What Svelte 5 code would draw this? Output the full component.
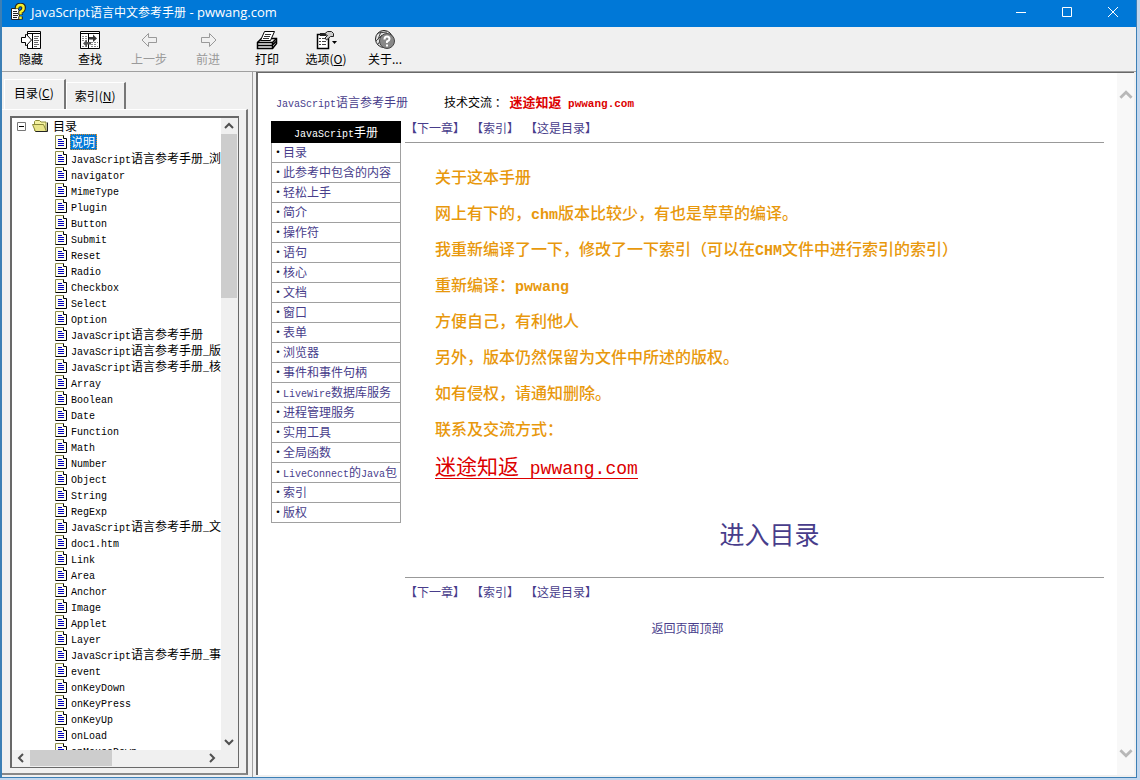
<script>
	let tab = $state('contents');
	let selected = $state(0);
	let open = $state(true);
	let tree;
	let page;

	const topics = [
		'说明', 'JavaScript语言参考手册_浏', 'navigator', 'MimeType', 'Plugin', 'Button', 'Submit',
		'Reset', 'Radio', 'Checkbox', 'Select', 'Option', 'JavaScript语言参考手册',
		'JavaScript语言参考手册_版', 'JavaScript语言参考手册_核', 'Array', 'Boolean', 'Date',
		'Function', 'Math', 'Number', 'Object', 'String', 'RegExp', 'JavaScript语言参考手册_文',
		'doc1.htm', 'Link', 'Area', 'Anchor', 'Image', 'Applet', 'Layer',
		'JavaScript语言参考手册_事', 'event', 'onKeyDown', 'onKeyPress', 'onKeyUp', 'onLoad',
		'onMouseDown'
	];

	const chapters = [
		'目录', '此参考中包含的内容', '轻松上手', '简介', '操作符', '语句', '核心', '文档', '窗口',
		'表单', '浏览器', '事件和事件句柄', 'LiveWire数据库服务', '进程管理服务', '实用工具',
		'全局函数', 'LiveConnect的Java包', '索引', '版权'
	];

	const about = [
		'关于这本手册',
		'网上有下的，chm版本比较少，有也是草草的编译。',
		'我重新编译了一下，修改了一下索引（可以在CHM文件中进行索引的索引）',
		'重新编译：pwwang',
		'方便自己，有利他人',
		'另外，版本仍然保留为文件中所述的版权。',
		'如有侵权，请通知删除。',
		'联系及交流方式：'
	];

	const tools = [
		{ id: 'hide', label: '隐藏' },
		{ id: 'find', label: '查找' },
		{ id: 'back', label: '上一步', disabled: true },
		{ id: 'forward', label: '前进', disabled: true },
		{ id: 'print', label: '打印' },
		{ id: 'options', label: '选项', key: 'O' },
		{ id: 'about', label: '关于...' }
	];

	// split into latin and chinese runs, latin is set half as wide
	const runs = (text) => text.match(/[\x20-\x7e]+|[^\x20-\x7e]+/g) || [];
	const isLatin = (run) => /^[\x20-\x7e]/.test(run);
</script>

{#snippet mixed(text)}
	{#each runs(text) as run}{#if isLatin(run)}<span class="latin">{run}</span>{:else}{run}{/if}{/each}
{/snippet}

{#snippet chevron(dir)}
	<svg class="chevron {dir}" viewBox="0 0 10 10" width="10" height="10"><path d="M1 7 L5 3 L9 7" /></svg>
{/snippet}

{#snippet icon(id)}
	<svg class="icon" viewBox="0 0 22 20" width="22" height="20">
		{#if id === 'hide'}
			<path fill="#fff" stroke="#000" d="M7.5 1.5h13v17h-13z" />
			<path stroke="#000" d="M7 3.500h14M12.500 4v15" />
			<path stroke="#666" d="M14 6.500h5M14 8.500h4M14 10.500h5M14 12.500h4M14 14.500h5M14 16.500h3" />
			<path fill="#fff" stroke="#000" d="M1.500 7.500h4v-3h1l5 5.500-5 5.500h-1v-3h-4z" />
		{:else if id === 'find'}
			<path fill="#fff" stroke="#000" d="M1.500 1.500h19v17h-19z" />
			<path stroke="#000" d="M1 3.500h20M9.500 4v15" />
			<path stroke="#888" stroke-dasharray="2 1" d="M3 6.500h5M3 8.500h5M3 10.500h4M12 12.500h7M12 14.500h6M12 16.500h7M3 16.500h5" />
			<path fill="#333" d="M10 7h4V4.500l4 4-4 3.500V9.500h-4z" />
			<path fill="#555" d="M12 12H8V9.500l-4 4L8 17v-2.500h4z" />
		{:else if id === 'back'}
			<path fill="none" stroke="#999" d="M10.500 3.500v4h8v5h-8v4l-6.500-6.500z" />
		{:else if id === 'forward'}
			<path fill="none" stroke="#999" d="M12.500 3.500v4h-8v5h8v4l6.500-6.500z" />
		{:else if id === 'print'}
			<path fill="#eee" stroke="#000" stroke-width="1.500" d="M1.500 12.500l4-4h15v5l-4 5h-15z" />
			<path fill="#fff" stroke="#000" d="M8.500 1.500h10l-4 9h-10z" />
			<path stroke="#333" d="M9 4.500h6M8 6.500h6M7 8.500h6" />
			<path fill="none" stroke="#000" stroke-width="1.500" d="M1.500 12.500h15l4-4M16.500 12.500v6M2 15.500h14l4-4" />
		{:else if id === 'options'}
			<path fill="#fff" stroke="#000" stroke-width="1.500" d="M2.500 4.500h11v14h-11z" />
			<path fill="#222" d="M5 3h6v3H5z" />
			<path stroke="#444" d="M4 8.500h2M7 8.500h4M4 11.500h2M7 11.500h4M4 14.500h2M7 14.500h4" />
			<path fill="#ccc" stroke="#222" d="M9.500 4l3-2.500h4l2 2v3h-3l-4 3.500-1.500-2 2.500-2.500z" />
			<path fill="#000" d="M17 11h5l-2.500 3z" />
		{:else if id === 'about'}
			<circle cx="10" cy="9" r="8.500" fill="#e4e4e4" stroke="#222" />
			<path fill="none" stroke="#444" d="M4 3l9-1M2 11l6-6M4 14l3-4M7 1.500l-3 8" />
			<circle cx="13" cy="11" r="7.500" fill="#888" stroke="#444" />
			<path fill="none" stroke="#fff" stroke-width="2" d="M10.500 9.500q0-3 2.500-3t2.500 2.500q0 1.500-2.500 2.500v1.500M13 14.500v2" />
		{/if}
	</svg>
{/snippet}

{#snippet chapterNav()}
	<nav class="chapter-nav">
		<a href="#next">【下一章】</a>
		<a href="#index">【索引】</a>
		<a href="#contents">【这是目录】</a>
	</nav>
{/snippet}

<div class="desktop">
	<div class="window">
		<header class="titlebar">
			<svg viewBox="0 0 16 18" width="16" height="18">
				<path fill="#fff" stroke="#222" d="M1.500 5.500h6l2 2v9h-8z" />
				<path stroke="#222" d="M3 8.500h4M3 10.500h5M3 12.500h5M3 14.500h4" />
				<path fill="none" stroke="#222" stroke-width="4.500" d="M7 6q-.5-4 3.500-4t3 3.500q0 2-3 3.500v3M10.500 13.500v3" />
				<path fill="none" stroke="#f4ee2a" stroke-width="2.500" d="M7 5.500q0-3.500 3.500-3.500t3 3.500q0 2-3 3.500v2.500M10.500 13.500v2.500" />
			</svg>
			<h1>{@render mixed('JavaScript语言中文参考手册 - pwwang.com')}</h1>
			<div class="caption">
				<button aria-label="最小化"><svg viewBox="0 0 12 12" width="12" height="12"><path d="M1 6.500h10" /></svg></button>
				<button aria-label="最大化"><svg viewBox="0 0 12 12" width="12" height="12"><path d="M1.500 1.500h9v9h-9z" /></svg></button>
				<button aria-label="关闭"><svg viewBox="0 0 12 12" width="12" height="12"><path d="M1 1l10 10M11 1L1 11" /></svg></button>
			</div>
		</header>

		<div class="toolbar" role="toolbar">
			{#each tools as tool}
				<button disabled={tool.disabled}>
					{@render icon(tool.id)}
					<span>{tool.label}{#if tool.key}(<u>{tool.key}</u>){/if}</span>
				</button>
			{/each}
		</div>

		<div class="body">
			<aside>
				<div class="tabs" role="tablist">
					<button role="tab" aria-selected={tab === 'contents'} class:active={tab === 'contents'} onclick={() => (tab = 'contents')}>目录(<u>C</u>)</button>
					<button role="tab" aria-selected={tab === 'index'} class:active={tab === 'index'} onclick={() => (tab = 'index')}>索引(<u>N</u>)</button>
				</div>
				<div class="panel">
					<div class="treebox">
						<div class="tree" bind:this={tree}>
							<button class="root" onclick={() => (open = !open)}>
								<svg viewBox="0 0 9 9" width="9" height="9"><path fill="#fff" stroke="#777" d="M.5 .5h8v8h-8z" /><path stroke="#000" d={open ? 'M2 4.500h5' : 'M2 4.500h5M4.500 2v5'} /></svg>
								<svg viewBox="0 0 16 14" width="16" height="14">
									<path fill="#f5f2a0" stroke="#8a8a3a" d="M2.500 11.500v-9l1-1h4l1.500 1.500h5v9z" />
									<path fill="#e9e58a" stroke="#8a8a3a" d="M.5 5.500h11l3 7h-11z" />
									<path fill="none" stroke="#222" d="M3.500 12.500h12v-9" />
								</svg>
								<span>目录</span>
							</button>
							{#if open}
								<ul>
									{#each topics as topic, i}
										<li>
											<svg viewBox="0 0 12 14" width="12" height="14">
												<path fill="#fffff0" stroke="#8a8a4a" d="M.5 13.500v-13h8" />
												<path fill="#fffff0" d="M1 1h7l3 3v9H1z" />
												<path fill="none" stroke="#000" d="M8.500 .5v3h3v10h-11" />
												<path stroke="#0000c0" d="M3 4.500h4M3 6.500h6M3 8.500h6M3 10.500h6" />
											</svg>
											<button class:selected={selected === i} onclick={() => (selected = i)}>{@render mixed(topic)}</button>
										</li>
									{/each}
								</ul>
							{/if}
						</div>
						<div class="vscroll">
							<button aria-label="向上滚动" onclick={() => tree.scrollBy(0, -16)}>{@render chevron('up')}</button>
							<div class="thumb"></div>
							<button aria-label="向下滚动" onclick={() => tree.scrollBy(0, 16)}>{@render chevron('down')}</button>
						</div>
						<div class="hscroll">
							<button aria-label="向左滚动" onclick={() => tree.scrollBy(-16, 0)}>{@render chevron('left')}</button>
							<div class="thumb"></div>
							<button aria-label="向右滚动" onclick={() => tree.scrollBy(16, 0)}>{@render chevron('right')}</button>
						</div>
					</div>
				</div>
			</aside>

			<main>
				<div class="page" bind:this={page}>
					<div class="crumbs">
						<a href="#manual">{@render mixed('JavaScript语言参考手册')}</a>
						<span>技术交流 ： <b>{@render mixed('迷途知返 pwwang.com')}</b></span>
					</div>
					<div class="columns">
						<nav class="chapters">
							<h2>{@render mixed('JavaScript手册')}</h2>
							<ul>
								{#each chapters as chapter}
									<li><a href="#chapter">{@render mixed(chapter)}</a></li>
								{/each}
							</ul>
						</nav>
						<div class="content">
							{@render chapterNav()}
							<hr />
							<article>
								{#each about as line}
									<p>{@render mixed(line)}</p>
								{/each}
								<a class="site" href="#pwwang">{@render mixed('迷途知返 pwwang.com')}</a>
								<a class="enter" href="#contents">进入目录</a>
							</article>
							<hr />
							{@render chapterNav()}
						</div>
					</div>
					<a class="to-top" href="#top">返回页面顶部</a>
				</div>
				<div class="page-scroll">
					<button aria-label="向上滚动" onclick={() => page.scrollBy(0, -40)}>{@render chevron('up')}</button>
					<button aria-label="向下滚动" onclick={() => page.scrollBy(0, 40)}>{@render chevron('down')}</button>
				</div>
			</main>
		</div>
	</div>
</div>

<style>
	:global(body) {
		margin: 0;
	}

	.desktop {
		box-sizing: border-box;
		height: 100vh;
		padding: 0 3px 2px 0;
		background: #c3d7ee;
		font: 12px/16px 'Noto Sans CJK SC', sans-serif;
		color: #000;
	}

	.desktop * {
		box-sizing: border-box;
	}

	.window {
		display: flex;
		flex-direction: column;
		height: 100%;
		border: solid #3c7fb5;
		border-width: 0 1px 1px 2px;
		background: #f0f0f0;
	}

	button {
		margin: 0;
		padding: 0;
		border: 0;
		background: none;
		font: inherit;
		color: inherit;
	}

	ul {
		margin: 0;
		padding: 0;
		list-style: none;
	}

	a {
		color: #483d8b;
		text-decoration: none;
	}

	svg {
		flex: none;
		display: block;
	}

	.latin {
		font-family: 'Liberation Mono', monospace;
		font-size: 10px;
		line-height: 1;
		white-space: pre;
	}

	.titlebar {
		flex: none;
		display: flex;
		align-items: center;
		gap: 5px;
		height: 27px;
		padding: 0 0 3px 8px;
		background: #0078d7;
		color: #fff;
	}

	h1 {
		flex: 1;
		margin: 0;
		font-size: 12px;
		font-weight: 400;
		line-height: 16px;
	}

	h1 .latin {
		font-family: 'Open Sans', sans-serif;
		font-size: 13px;
	}

	.caption {
		display: flex;
	}

	.caption button {
		display: grid;
		place-items: center;
		width: 46px;
		height: 24px;
	}

	.caption path {
		fill: none;
		stroke: #fff;
	}

	.toolbar {
		flex: none;
		display: flex;
		height: 45px;
		border-bottom: 1px solid #a0a0a0;
	}

	.toolbar button {
		display: flex;
		flex-direction: column;
		align-items: center;
		gap: 1px;
		width: 59px;
		padding: 3px 1px 0 0;
		white-space: nowrap;
	}

	.toolbar button:disabled {
		color: #9a9a9a;
	}

	.body {
		flex: 1;
		display: flex;
		min-height: 0;
	}

	aside {
		flex: none;
		display: flex;
		flex-direction: column;
		width: 251px;
		padding: 7px 4px 2px 0;
		border-right: 1px solid #a0a0a0;
	}

	.tabs {
		display: flex;
		align-items: flex-end;
		height: 30px;
		padding-left: 2px;
	}

	.tabs button {
		height: 27px;
		padding: 0 8px;
		border-top: 1px solid #fff;
		border-left: 1px solid #fff;
		border-right: 2px solid #777;
	}

	.tabs button.active {
		height: 30px;
		padding: 0 10px 3px 9px;
	}

	.panel {
		flex: 1;
		min-height: 0;
		padding: 6px 7px 5px 8px;
		border-right: 2px solid #777;
		border-bottom: 2px solid #888;
		border-top: 1px solid #fff;
	}

	.treebox {
		display: grid;
		grid-template: minmax(0, 1fr) 16px / minmax(0, 1fr) 16px;
		height: 100%;
		padding: 0 1px 1px 0;
		border: 1px solid #696969;
		border-width: 2px 1px 1px 2px;
		background: #f0f0f0;
	}

	.tree {
		overflow: hidden;
		background: #fff;
	}

	.root {
		display: flex;
		align-items: center;
		gap: 5px;
		height: 16px;
		padding-left: 5px;
	}

	.root svg + svg {
		margin-left: 1px;
	}

	.tree li {
		display: flex;
		align-items: center;
		gap: 3px;
		height: 16px;
		padding-left: 43px;
		white-space: nowrap;
	}

	.tree li button {
		height: 16px;
		padding: 0 1px;
		border: 1px solid transparent;
		border-width: 1px 0;
		line-height: 14px;
	}

	.tree li button.selected {
		padding: 0 1px 0 0;
		border: 1px dotted #d88a2a;
		background: #0078d7;
		color: #fff;
	}

	.vscroll {
		display: flex;
		flex-direction: column;
	}

	.vscroll .thumb {
		height: 164px;
		margin-bottom: auto;
	}

	.vscroll button,
	.hscroll button {
		display: grid;
		place-items: center;
		width: 16px;
		height: 16px;
	}

	.hscroll {
		display: flex;
	}

	.hscroll button {
		width: 18px;
	}

	.hscroll .thumb {
		width: 82px;
		margin-right: auto;
	}

	.thumb {
		background: #cdcdcd;
	}

	.chevron path {
		fill: none;
		stroke: #505050;
		stroke-width: 2;
	}

	.down {
		transform: rotate(180deg);
	}

	.left {
		transform: rotate(-90deg);
	}

	.right {
		transform: rotate(90deg);
	}

	main {
		flex: 1;
		display: flex;
		min-width: 0;
		margin: 0 2px 2px 3px;
		border-top: 1px solid #696969;
		border-left: 2px solid #696969;
		background: #fff;
	}

	.page {
		flex: 1;
		min-width: 0;
		padding: 21px 13px 0;
		overflow: hidden;
	}

	.page-scroll {
		display: flex;
		flex-direction: column;
		justify-content: space-between;
		width: 17px;
		padding: 14px 0;
		background: #f8f8f8;
	}

	.page-scroll button {
		display: grid;
		place-items: center;
		height: 16px;
	}

	.page-scroll svg {
		width: 14px;
		height: 14px;
	}

	.page-scroll path {
		stroke: #b8b8b8;
	}

	.crumbs {
		display: flex;
		gap: 36px;
		padding-left: 5px;
		white-space: nowrap;
	}

	.crumbs b {
		color: #dc0000;
		font-size: 13px;
		line-height: 1;
	}

	.crumbs b .latin {
		font-size: 11px;
	}

	.columns {
		display: flex;
		gap: 4px;
		margin-top: 11px;
	}

	.chapters {
		flex: none;
		width: 130px;
	}

	h2 {
		margin: 0;
		background: #000;
		color: #fff;
		font-size: 12px;
		font-weight: 400;
		line-height: 22px;
		text-align: center;
	}

	.chapters li {
		display: flex;
		height: 20px;
		border: 1px solid #a0a0a0;
		border-top: 0;
		line-height: 18px;
		white-space: nowrap;
	}

	.chapters li::before {
		content: '·';
		width: 11px;
		text-align: center;
	}

	.content {
		flex: 1;
		min-width: 0;
	}

	.chapter-nav {
		display: flex;
		gap: 6px;
		padding-bottom: 7px;
		line-height: 14px;
	}

	hr {
		height: 1px;
		margin: 0;
		border: 0;
		background: #999;
	}

	hr + .chapter-nav {
		padding-top: 7px;
	}

	article {
		display: flex;
		flex-direction: column;
		align-items: flex-start;
		padding: 21px 0 28px 30px;
	}

	article p {
		margin: 0;
		padding-bottom: 12px;
		color: #e8980c;
		font-size: 16px;
		font-weight: 500;
		line-height: 24px;
	}

	article p .latin {
		font-size: 15px;
		font-weight: 700;
	}

	.site {
		margin-top: 2px;
		border-bottom: 1px solid #dc0000;
		color: #dc0000;
		font-size: 21px;
		line-height: 22px;
	}

	.site .latin {
		font-size: 18px;
	}

	.enter {
		align-self: center;
		margin-top: 38px;
		font-size: 25px;
		line-height: 32px;
	}

	.to-top {
		display: table;
		margin: 14px auto 0;
	}
</style>
